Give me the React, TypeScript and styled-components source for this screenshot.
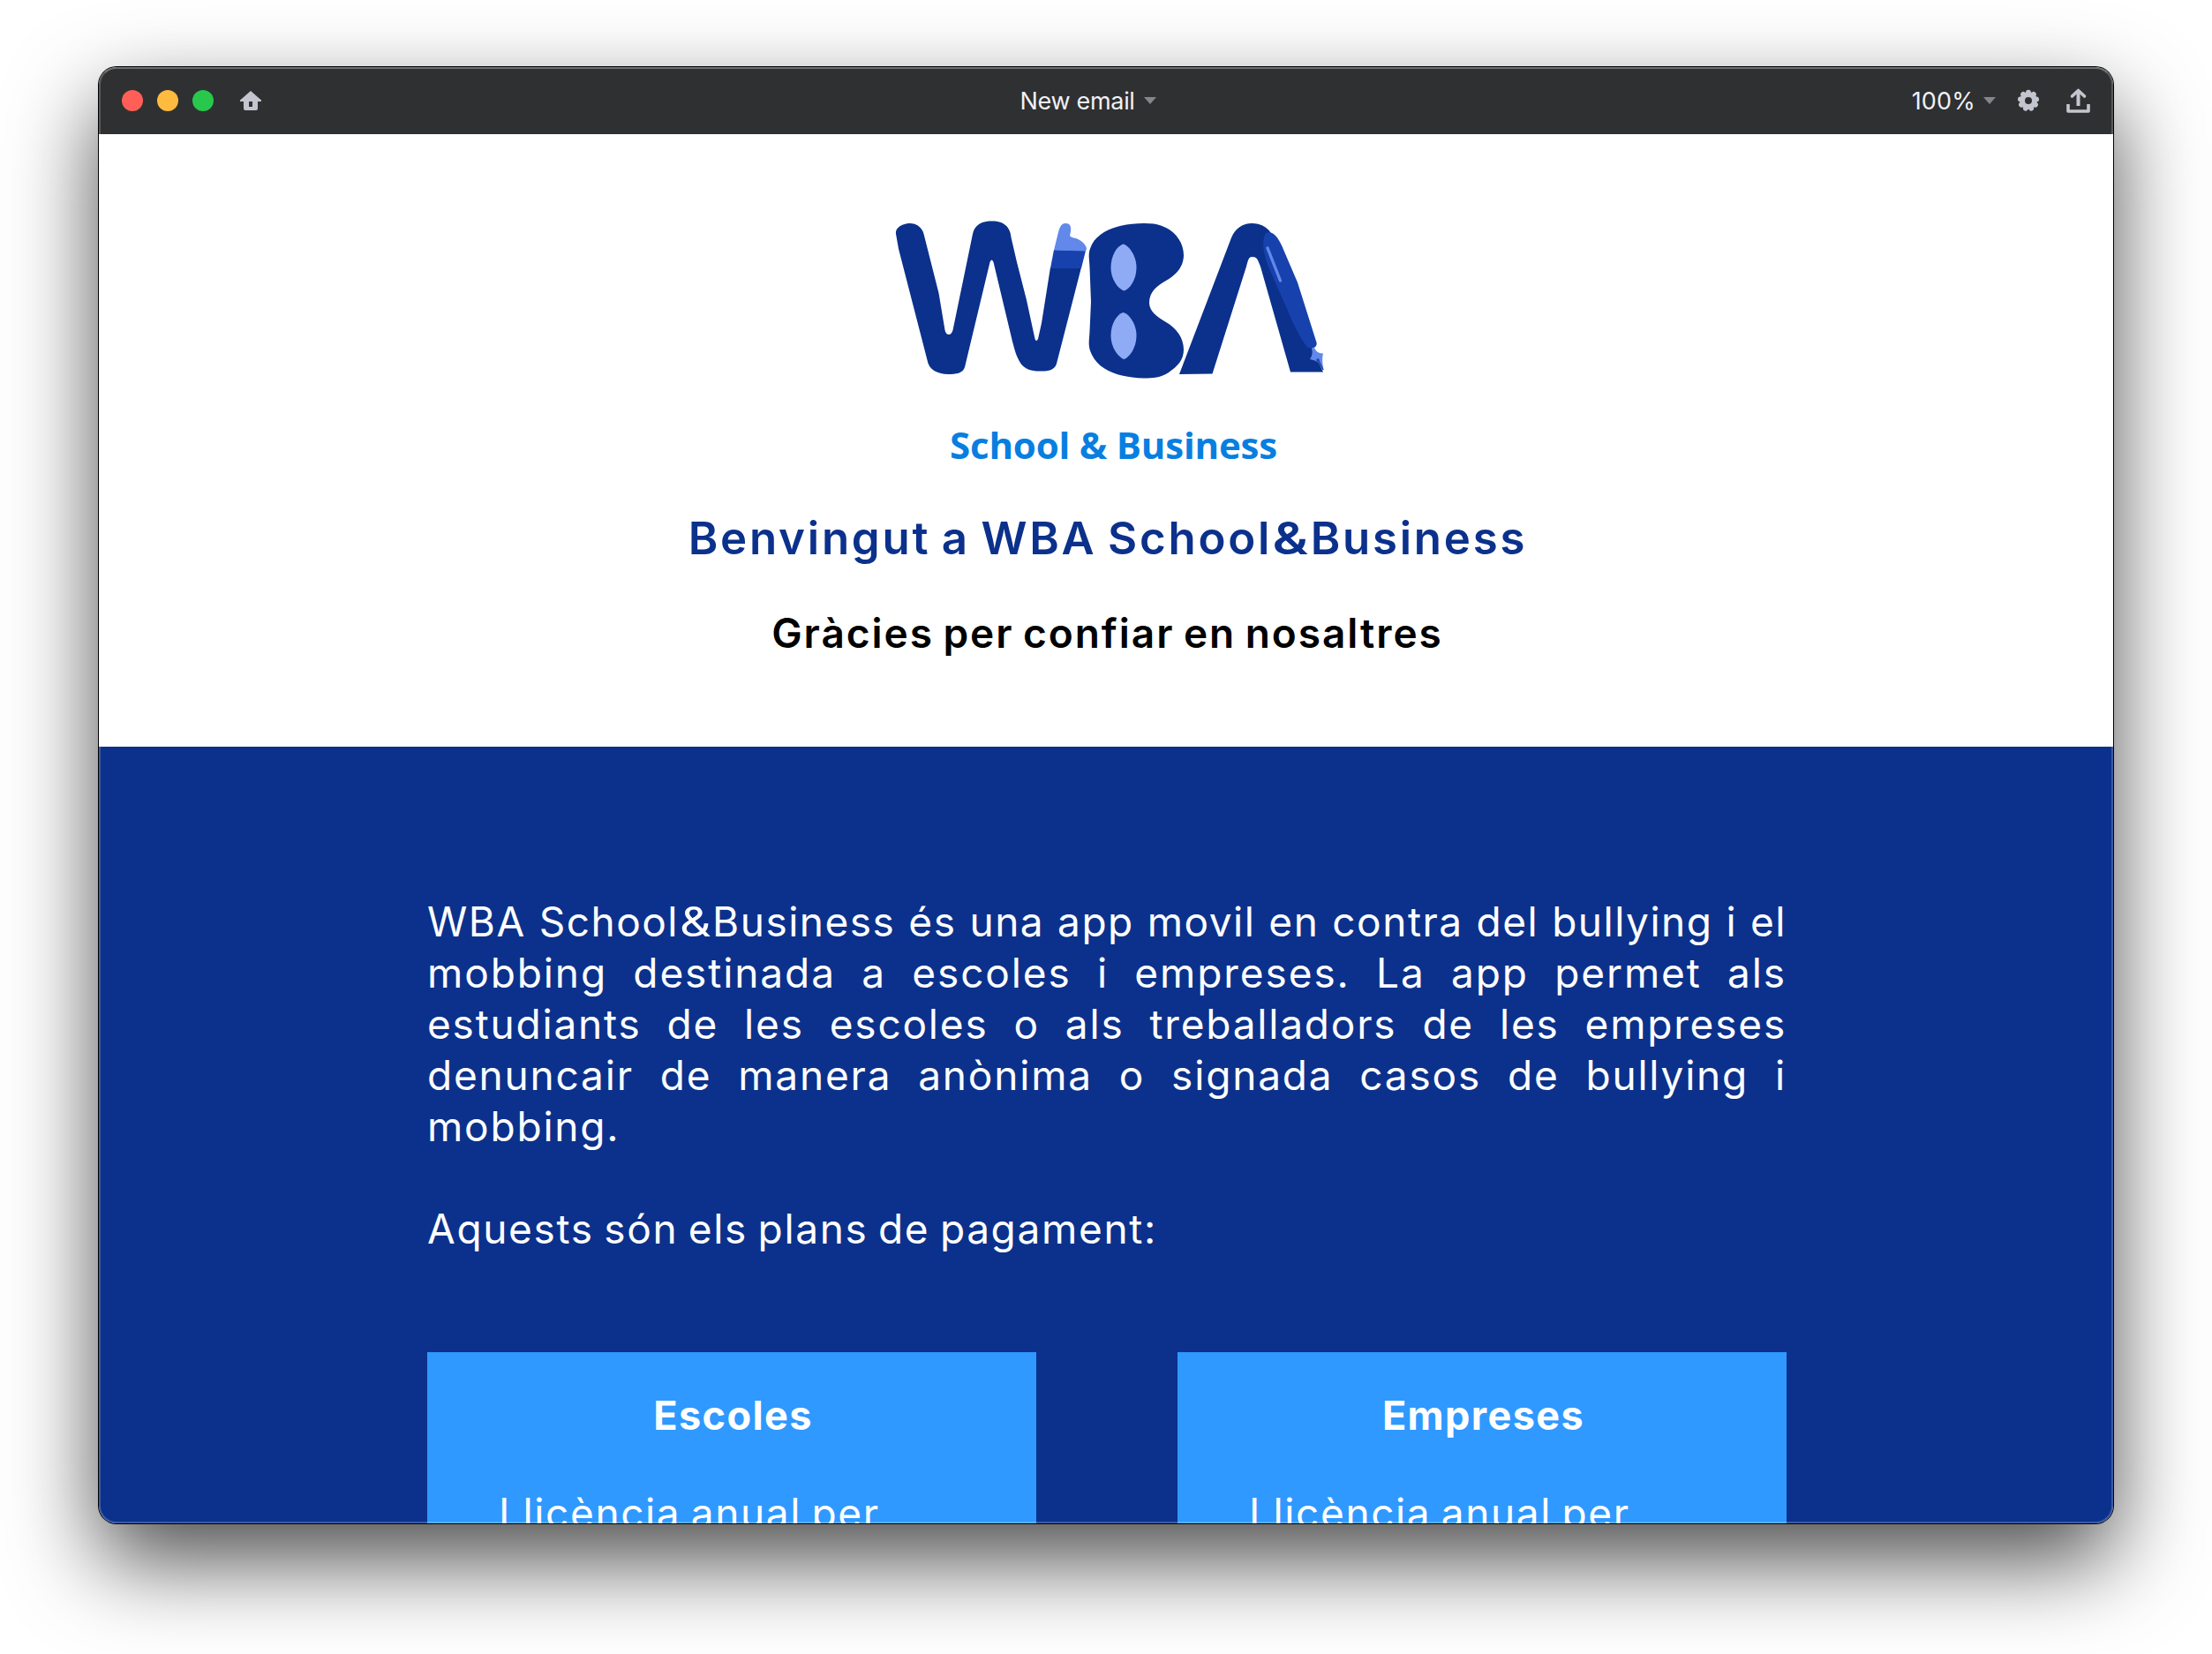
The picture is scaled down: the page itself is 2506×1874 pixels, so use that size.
import React from "react";
import styled, { createGlobalStyle } from "styled-components";

const GlobalStyle = createGlobalStyle`
  * { box-sizing: border-box; }
  html, body { margin: 0; background: #fff; }
  h1, h2, h3, p { margin: 0; }
`;

const Desktop = styled.div`
  width: 2506px;
  height: 1874px;
  padding: 76px 112px 148px;
  overflow: hidden;
  background: #fff;
  font-family: Inter, "Liberation Sans", sans-serif;
`;

const Window = styled.main`
  position: relative;
  width: 2282px;
  height: 1650px;
  display: flex;
  flex-direction: column;
  border-radius: 20px;
  box-shadow: 0 0 0 1px #000, 0 42px 100px rgba(0, 0, 0, 0.7);
`;

const Rim = styled.div`
  position: absolute;
  inset: 0;
  border-radius: 20px;
  border: 2px solid rgba(255, 255, 255, 0.2);
  border-top-color: rgba(255, 255, 255, 0.3);
  pointer-events: none;
`;

const TitleBar = styled.header`
  flex: none;
  height: 76px;
  padding: 0 26px;
  display: grid;
  grid-template-columns: 1fr auto 1fr;
  align-items: center;
  background: #2f3032;
  border-radius: 20px 20px 0 0;
  color: #f1f1f6;
  font-size: 27px;
`;

const BarGroup = styled.div<{ $end?: boolean }>`
  display: flex;
  align-items: center;
  justify-content: ${(p) => (p.$end ? "flex-end" : "flex-start")};
`;

const Light = styled.span<{ $color: string }>`
  width: 24px;
  height: 24px;
  margin-right: 16px;
  border-radius: 50%;
  background: ${(p) => p.$color};
`;

const HomeIcon = styled.svg`
  margin-left: 14px;
`;

const GearIcon = styled.svg`
  margin-left: 24px;
`;

const ShareIcon = styled.svg`
  margin-left: 30px;
`;

const DocName = styled.div`
  display: flex;
  align-items: center;
  gap: 10px;
  margin-right: 41px;
  letter-spacing: -0.3px;
`;

const Zoom = styled.div`
  display: flex;
  align-items: center;
  gap: 9px;
  letter-spacing: 0.2px;
`;

const Caret = styled.span`
  border: 7px solid transparent;
  border-top: 8px solid #85868a;
  border-bottom: 0;
`;

const Viewport = styled.div`
  flex: 1;
  min-height: 0;
  overflow: hidden;
  border-radius: 0 0 20px 20px;
  background: #0b318c;
`;

const Hero = styled.section`
  height: 694px;
  padding-top: 88px;
  display: flex;
  flex-direction: column;
  align-items: center;
  background: #fff;
  white-space: nowrap;
`;

const Logo = styled.svg`
  flex: none;
  width: 500px;
  height: 190px;
  margin-right: 6px;
`;

const Tagline = styled.p`
  margin: 44px 0 0 17px;
  font: 700 42px/60px "Open Sans", sans-serif;
  letter-spacing: -0.2px;
  color: #087fe0;
`;

const Welcome = styled.h1`
  margin-top: 46px;
  padding-left: 4px;
  font-size: 51px;
  line-height: 60px;
  font-weight: 600;
  letter-spacing: 2.75px;
  word-spacing: -3px;
  color: #0b318c;
`;

const Amp = styled.span`
  display: inline-block;
  padding: 0 3px 0 4px;
  transform: scaleX(1.2);
`;

const Thanks = styled.h2`
  margin-top: 48px;
  padding-left: 3px;
  font-size: 46px;
  line-height: 58px;
  font-weight: 600;
  letter-spacing: 1.95px;
  word-spacing: -3px;
  color: #000;
`;

const Body = styled.section`
  width: 1540px;
  margin: 169px 0 0 372px;
  display: flex;
  flex-direction: column;
  color: #fff;
`;

const Copy = styled.div`
  font-size: 46px;
  line-height: 58px;
`;

const Line = styled.p<{ $track: number }>`
  white-space: nowrap;
  text-align: justify;
  text-align-last: justify;
  word-spacing: -4px;
  letter-spacing: ${(p) => p.$track}px;
`;

const Loose = styled.p<{ $track: number; $gap?: boolean }>`
  white-space: nowrap;
  word-spacing: -3px;
  letter-spacing: ${(p) => p.$track}px;
  margin-top: ${(p) => (p.$gap ? 58 : 0)}px;
`;

const Plans = styled.div`
  display: flex;
  justify-content: space-between;
  margin-top: 111px;
`;

const Plan = styled.article`
  width: 690px;
  height: 600px;
  padding: 43px 80px;
  background: #2f99ff;
`;

const PlanName = styled.h3`
  padding-left: 3px;
  font-size: 45px;
  line-height: 58px;
  font-weight: 700;
  letter-spacing: 1.4px;
  text-align: center;
`;

const PlanText = styled.p`
  margin-top: 52px;
  padding-left: 1px;
  font-size: 46px;
  line-height: 58px;
  letter-spacing: 1.6px;
  word-spacing: -3px;
  white-space: nowrap;
`;

function WbaLogo() {
  return (
    <Logo viewBox="1000 240 500 190">
      <g fill="#0b318c">
        <path d="M1015 265C1014 258 1022 253.500 1030.500 253C1039 253 1044.500 258 1046.500 265L1063.500 332L1070.500 374Q1071.500 379 1075 379Q1078 379 1079.500 374L1102 265C1104 255 1112 250.500 1124 250.500C1136 250.500 1144.500 256 1145.500 269L1152 297L1163 340L1172.500 384Q1174 388 1176 384L1180 366L1190 303H1225L1197 412C1195 419 1188 420.500 1180 420.500C1170 421 1162 419 1156.500 412C1151 403 1150 398 1147 387L1125.500 297Q1123.500 292 1121.500 297L1093 416C1091 423 1083 424 1074 424C1063 424 1052 419 1050.500 408L1018 282Z" />
        <path d="M1296 253C1306 253 1313 254 1321 258C1333 264 1341 276 1341 289C1341 304 1330 313 1321 318C1312 323 1302 330 1302 343C1302 353 1311 359 1321 365C1333 372 1341 383 1341 396C1341 408 1334 415 1324 422C1315 428 1306 428.500 1296 428.500C1271 428 1246 421 1237 402C1232 392 1234 387 1234.500 375L1236 342L1234.500 303C1234 291 1232 287 1237 277C1246 260 1271 253 1296 253Z" />
        <path d="M1336 424L1394 272C1398 260 1407 253 1418 253C1428 253 1435 257 1440 264L1480 380L1499 421.500H1462L1428 302C1425 294 1424 291 1418.500 291C1415 291 1414 294 1412 302L1373.500 423.500Z" />
      </g>
      <path fill="#1742ae" d="M1194 283L1230 284L1225 304H1190Z" />
      <path fill="#6188ea" d="M1194 283.500L1199 263C1201 256 1203 253 1207 253C1214 253 1214 259 1212 267Q1213 269 1219 270C1227 273 1231 279 1231 282L1230 284.500Z" />
      <g fill="#90abf5">
        <path d="M1272.500 276.500C1279 278 1287.500 290 1287.500 303C1287.500 318 1279 328 1273.500 329.500C1268 328 1258.500 318 1258.500 303C1258.500 289 1266 278 1272.500 276.500Z" />
        <path d="M1272.500 354C1279 355.500 1287.500 367 1287.500 380C1287.500 395 1279 405 1273.500 407C1268 405.500 1258.500 395 1258.500 380C1258.500 366 1266 355.500 1272.500 354Z" />
      </g>
      <path fill="#1742ae" d="M1434 264C1441 261 1447 267 1452 278L1470 320L1491.500 388C1493 394 1485 397 1480 392C1474 384 1467 371 1462 359L1437 302C1431 287 1429 272 1434 264Z" />
      <path stroke="#6188ea" strokeWidth="3.400" strokeLinecap="round" d="M1436 281L1450.500 318" />
      <path fill="#6188ea" d="M1489 394Q1492 401 1499 400.500Q1497 407 1499.500 419L1494 411Q1490 408 1484 407Q1488 401 1486 395Z" />
      <path stroke="#1742ae" strokeWidth="1.600" d="M1493 407L1499 419" />
      <circle cx="1493" cy="408" r="1.700" fill="#1742ae" />
    </Logo>
  );
}

const teeth = Array.from({ length: 9 }, (_, i) => (i * 360) / 9);

export default function App() {
  return (
    <>
      <GlobalStyle />
      <Desktop>
        <Window>
          <TitleBar>
            <BarGroup>
              <Light $color="#ff5f57" />
              <Light $color="#febb3e" />
              <Light $color="#28c84c" />
              <HomeIcon width="24" height="24" viewBox="0 0 24 24" fill="#c3c6ce">
                <path
                  fillRule="evenodd"
                  d="M12 1L24 11.500V13H20V21Q20 23 18 23H6Q4 23 4 21V13H0V11.500ZM10 13V19H14V13Z"
                />
              </HomeIcon>
            </BarGroup>
            <DocName>
              New email
              <Caret />
            </DocName>
            <BarGroup $end>
              <Zoom>
                100%
                <Caret />
              </Zoom>
              <GearIcon width="26" height="26" viewBox="-13 -13 26 26">
                <g fill="#c3c6ce">
                  {teeth.map((a) => (
                    <circle key={a} cx="0" cy="-9.300" r="2.900" transform={`rotate(${a})`} />
                  ))}
                </g>
                <circle r="7" fill="none" stroke="#c3c6ce" strokeWidth="6" />
              </GearIcon>
              <ShareIcon width="27" height="28" viewBox="0 0 27 28" fill="none" stroke="#c3c6ce">
                <path strokeWidth="4" d="M13.500 20V4" />
                <path strokeWidth="3.600" strokeLinecap="round" strokeLinejoin="round" d="M6.500 9L13.500 2.500L20.500 9" />
                <path strokeWidth="3.600" strokeLinejoin="round" d="M2 18V26H25V18" />
              </ShareIcon>
            </BarGroup>
          </TitleBar>
          <Viewport>
            <Hero>
              <WbaLogo />
              <Tagline>School &amp; Business</Tagline>
              <Welcome>
                Benvingut a WBA School<Amp>&amp;</Amp>Business
              </Welcome>
              <Thanks>Gràcies per confiar en nosaltres</Thanks>
            </Hero>
            <Body>
              <Copy>
                <Line $track={1.5}>
                  WBA School<Amp>&amp;</Amp>Business és una app movil en contra del bullying i el
                </Line>
                <Line $track={1.9}>mobbing destinada a escoles i empreses. La app permet als</Line>
                <Line $track={1.8}>estudiants de les escoles o als treballadors de les empreses</Line>
                <Line $track={1.8}>denuncair de manera anònima o signada casos de bullying i</Line>
                <Loose $track={1.8}>mobbing.</Loose>
                <Loose $track={1.65} $gap>
                  Aquests són els plans de pagament:
                </Loose>
              </Copy>
              <Plans>
                <Plan>
                  <PlanName>Escoles</PlanName>
                  <PlanText>Llicència anual per</PlanText>
                </Plan>
                <Plan>
                  <PlanName>Empreses</PlanName>
                  <PlanText>Llicència anual per</PlanText>
                </Plan>
              </Plans>
            </Body>
          </Viewport>
          <Rim />
        </Window>
      </Desktop>
    </>
  );
}
